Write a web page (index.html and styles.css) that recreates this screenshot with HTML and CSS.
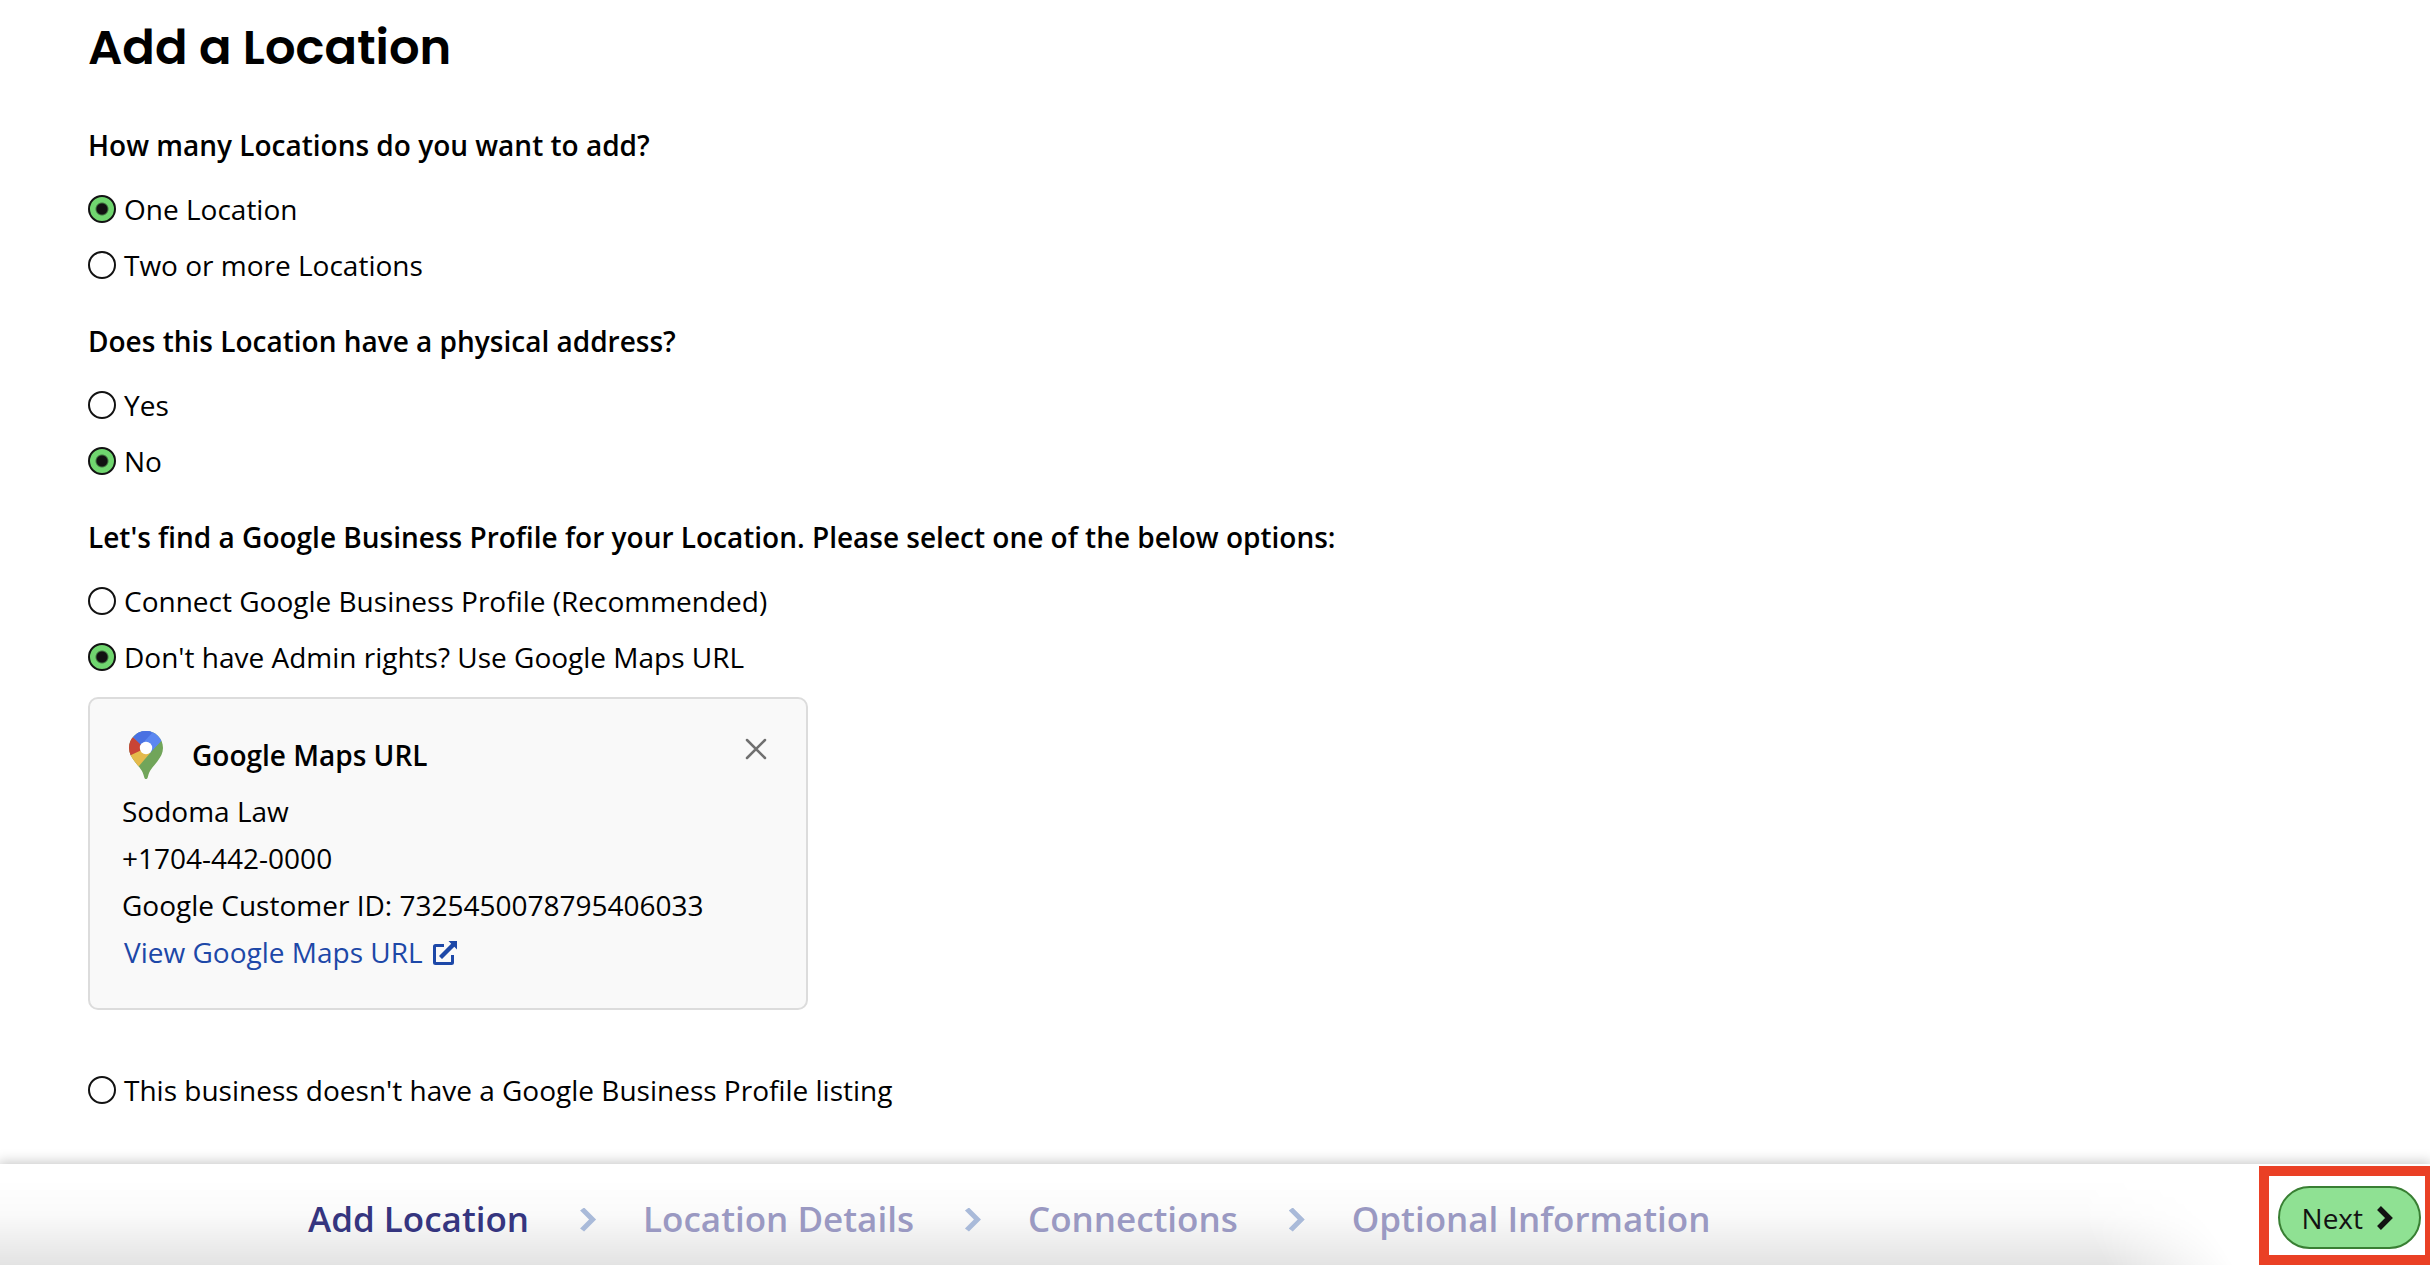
FILE: index.html
```html
<!DOCTYPE html>
<html lang="en">
<head>
<meta charset="utf-8">
<meta name="viewport" content="width=device-width, initial-scale=1">
<title>Add a Location</title>
<link rel="stylesheet" href="styles.css">
</head>
<body>
<main class="content">
  <h1 class="page-title">Add a Location</h1>
  <form class="form" id="location-form">
    <fieldset class="question">
      <legend class="question-title">How many Locations do you want to add?</legend>
      <div class="options">
        <label class="option"><input class="radio" type="radio" name="count" checked>One Location</label>
        <label class="option"><input class="radio" type="radio" name="count">Two or more Locations</label>
      </div>
    </fieldset>
    <fieldset class="question">
      <legend class="question-title">Does this Location have a physical address?</legend>
      <div class="options">
        <label class="option"><input class="radio" type="radio" name="address">Yes</label>
        <label class="option"><input class="radio" type="radio" name="address" checked>No</label>
      </div>
    </fieldset>
    <fieldset class="question">
      <legend class="question-title">Let's find a Google Business Profile for your Location. Please select one of the below options:</legend>
      <div class="options">
        <label class="option"><input class="radio" type="radio" name="profile">Connect Google Business Profile (Recommended)</label>
        <label class="option"><input class="radio" type="radio" name="profile" checked>Don't have Admin rights? Use Google Maps URL</label>
      </div>
      <section class="card" aria-labelledby="card-title">
        <header class="card-header">
          <svg class="pin" viewBox="0 0 48 48" aria-hidden="true">
            <defs><clipPath id="pin-shape"><path d="M24 0C14.500 0 7 7.500 7 17c0 5 2.300 9 5.500 13.200C17 36 20.500 39 22 45.500c.5 2 1 2.500 2 2.500s1.500-.5 2-2.500c1.500-6.500 5-9.500 9.500-15.300C38.700 26 41 22 41 17 41 7.500 33.500 0 24 0z"/></clipPath></defs>
            <g clip-path="url(#pin-shape)">
              <path fill="#71a55a" d="M0 0h48v48H0z"/>
              <path fill="#e5ba4b" d="M0 34L9 24 20 10l9 11-12 14-8 9z"/>
              <path fill="#c94436" d="M0 0l11 6 13 11-15 7-9 9z"/>
              <path fill="#5b87f1" d="M11 6L24-6h24v7L28 22l-6-6z"/>
              <path fill="#4a71e2" d="M11 6L24-6l6 8L19 14z"/>
            </g>
            <circle cx="24" cy="17" r="6.200" fill="#fff"/>
          </svg>
          <h2 class="card-title" id="card-title">Google Maps URL</h2>
          <button class="close" type="button" aria-label="Remove Google Maps URL">
            <svg viewBox="0 0 36 36" aria-hidden="true"><path d="M9 9l18 18M27 9L9 27" fill="none" stroke="#707070" stroke-width="2.500" stroke-linecap="round"/></svg>
          </button>
        </header>
        <p class="card-line">Sodoma Law</p>
        <p class="card-line">+1704-442-0000</p>
        <p class="card-line">Google Customer ID: 7325450078795406033</p>
        <p class="card-line"><a class="card-link" href="#">View Google Maps URL
          <svg class="external" viewBox="0 0 24 24" aria-hidden="true"><path d="M11 4.500H2.500a1 1 0 0 0-1 1V21.500a1 1 0 0 0 1 1H18.500a1 1 0 0 0 1-1V14" fill="none" stroke="#1d48a8" stroke-width="3"/><path d="M15.500 0H24v8.500l-2.700-2.700L9 18l-3-3L18.200 2.700z" fill="#1d48a8"/></svg></a></p>
      </section>
      <label class="option"><input class="radio" type="radio" name="profile">This business doesn't have a Google Business Profile listing</label>
    </fieldset>
  </form>
</main>
<footer class="footer">
  <ol class="steps">
    <li class="step step-current" aria-current="step">Add Location</li>
    <li class="step">Location Details</li>
    <li class="step">Connections</li>
    <li class="step">Optional Information</li>
  </ol>
  <div class="highlight">
    <button class="next" type="submit" form="location-form">Next
      <svg class="next-icon" viewBox="0 0 16 24" aria-hidden="true"><path d="M2 2l10 10L2 22" fill="none" stroke="#121212" stroke-width="5.500"/></svg>
    </button>
  </div>
</footer>
</body>
</html>
```
FILE: styles.css
```css
* { box-sizing: border-box; }

body {
  margin: 0;
  min-height: 100vh;
  display: flex;
  flex-direction: column;
  background: #fff;
  color: #000;
  font: 28px/40px "Open Sans", "Noto Sans", sans-serif;
}

.content { flex: 1; padding: 18px 88px 54px; }

.page-title {
  margin: 0 0 47px;
  font: 600 48px/60px Poppins, Inter, sans-serif;
}

.form { display: flex; flex-direction: column; gap: 36px; }

.question { margin: 0; padding: 0; border: 0; min-width: 0; }

.question-title { padding: 0; margin-bottom: 24px; font-weight: 600; }

.options { display: flex; flex-direction: column; align-items: flex-start; gap: 16px; }

.option { display: flex; align-items: center; gap: 8px; }

.radio {
  appearance: none;
  flex: none;
  width: 28px;
  height: 28px;
  margin: 0;
  border: 2px solid #121212;
  border-radius: 50%;
  background: #fff;
}

.radio:checked { background: radial-gradient(circle, #121212 5px, #70d66f 7px); }

.card {
  max-width: 720px;
  margin: 20px 0 60px;
  padding: 32px;
  border: 2px solid #dcdcdc;
  border-radius: 10px;
  background: #f9f9f9;
}

.card-header { display: flex; align-items: center; gap: 22px; margin-bottom: 9px; }

.pin { flex: none; width: 48px; height: 48px; }

.card-title { flex: 1; margin: 0; font-size: 28px; font-weight: 600; }

.close {
  align-self: flex-start;
  width: 36px;
  height: 36px;
  padding: 0;
  border: 0;
  background: none;
}

.close svg { display: block; }

.card-line { margin: 0; line-height: 47px; }

.card-link {
  display: inline-flex;
  align-items: center;
  gap: 10px;
  padding-left: 2px;
  color: #1d48a8;
  text-decoration: none;
}

.external { width: 24px; height: 24px; }

.footer {
  position: relative;
  display: flex;
  align-items: center;
  justify-content: space-between;
  padding: 2px 0 0 308px;
  background: #fff;
  box-shadow: 0 0 12px 2px rgba(0, 0, 0, 0.22);
}

/* Soft shade along the bottom edge that fades out before the button */
.footer::before {
  content: "";
  position: absolute;
  inset: 0;
  background: linear-gradient(rgba(0, 0, 0, 0) 15%, rgba(0, 0, 0, 0.02) 50%, rgba(0, 0, 0, 0.11));
  mask-image: linear-gradient(60deg, #000 calc(100% - 330px), transparent calc(100% - 220px));
}

.steps {
  position: relative;
  display: flex;
  margin: 0;
  padding: 6px 0 0;
  list-style: none;
  font-size: 35px;
  font-weight: 600;
  line-height: 50px;
}

.step { display: flex; align-items: center; color: #9a99c2; }

.step-current { color: #35357f; }

.step + .step::before {
  content: "";
  width: 16px;
  height: 24px;
  margin: 2px 47px 0 51px;
  background: #a9bad9;
  clip-path: polygon(0 12%, 25% 0, 100% 50%, 25% 100%, 0 88%, 56% 50%);
}

.highlight {
  position: relative;
  padding: 10px 4px 6px 9px;
  border: solid #ea4025;
  border-width: 10px 5px 10px 10px;
  background: #fff;
}

.next {
  display: flex;
  align-items: center;
  gap: 14px;
  height: 63px;
  padding: 0 26px 0 22px;
  border: 2px solid #397f33;
  border-radius: 32px;
  background: #8fe193;
  color: #121212;
  font: inherit;
}

.next-icon { width: 16px; height: 24px; }
```
